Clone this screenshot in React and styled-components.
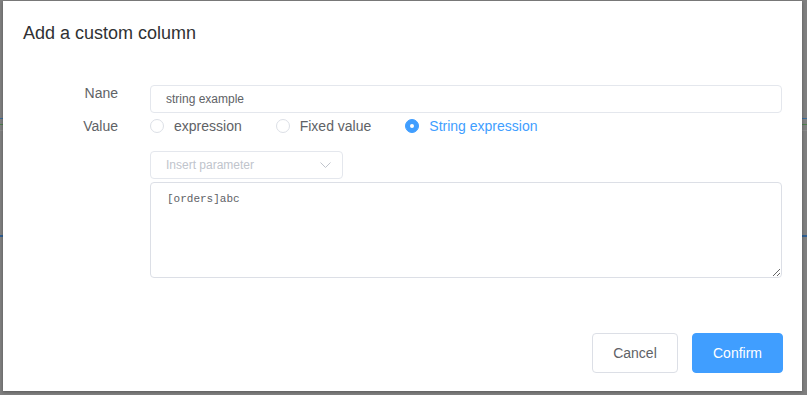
import { useState } from "react";
import styled, { createGlobalStyle } from "styled-components";

const GlobalStyle = createGlobalStyle`
  html, body {
    margin: 0;
    padding: 0;
  }
  body {
    width: 807px;
    height: 395px;
    overflow: hidden;
    background-color: #7f7f7f;
    background-image:
      linear-gradient(to bottom, transparent 235px, #2f5f93 235px, #2f5f93 237px, transparent 237px),
      linear-gradient(to bottom, transparent 118px, #3a6b9a 118px, #3a6b9a 119px, transparent 119px, transparent 124px, #4c7f4c 124px, #4c7f4c 125px, transparent 125px, transparent 130px, #8a8a8a 130px, #8a8a8a 131px, transparent 131px);
    background-size: 100% 100%, 100% 100%;
    font-family: "Liberation Sans", Arial, sans-serif;
  }
`;

const OPTIONS = ["expression", "Fixed value", "String expression"];

const App = () => {
  const [name, setName] = useState("string example");
  const [mode, setMode] = useState("String expression");
  const [expr, setExpr] = useState("[orders]abc");

  return (
    <>
      <GlobalStyle />
      <Dialog>
        <Header>
          <Title>Add a custom column</Title>
        </Header>
        <Body>
          <FormRow>
            <Label>Nane</Label>
            <Input value={name} onChange={(e) => setName(e.target.value)} />
          </FormRow>
          <FormRow>
            <Label $tall>Value</Label>
            <RadioGroup>
              {OPTIONS.map((opt) => (
                <Radio key={opt} $checked={mode === opt} onClick={() => setMode(opt)}>
                  <RadioCircle $checked={mode === opt} />
                  <span>{opt}</span>
                </Radio>
              ))}
            </RadioGroup>
          </FormRow>
          <FormRow $top={12}>
            <Label />
            <Select>
              <span>Insert parameter</span>
              <svg width="11" height="6" viewBox="0 0 11 6" fill="none">
                <path d="M0.5 0.5 L5.5 5.5 L10.5 0.5" stroke="#c0c4cc" strokeWidth="1" />
              </svg>
            </Select>
          </FormRow>
          <FormRow $top={3}>
            <Label />
            <TextArea value={expr} onChange={(e) => setExpr(e.target.value)} spellCheck={false} />
          </FormRow>
        </Body>
        <Footer>
          <Button>Cancel</Button>
          <Button $primary>Confirm</Button>
        </Footer>
      </Dialog>
    </>
  );
};
export default App;

const Dialog = styled.div`
  margin: 1px 5px 0 3px;
  width: 799px;
  height: 390px;
  background: #fff;
  display: flex;
  flex-direction: column;
  box-sizing: border-box;
  box-shadow: 0 1px 3px rgba(0, 0, 0, 0.3);
`;

const Header = styled.div`
  padding: 20px 20px 10px;
`;

const Title = styled.span`
  display: block;
  font-size: 18px;
  line-height: 24px;
  color: #303133;
`;

const Body = styled.div`
  padding: 30px 20px 0;
  display: flex;
  flex-direction: column;
`;

const FormRow = styled.div`
  display: flex;
  align-items: flex-start;
  margin-top: ${(p) => p.$top || 0}px;
`;

const Label = styled.label`
  flex: 0 0 95px;
  padding-right: 32px;
  text-align: right;
  font-size: 14px;
  line-height: ${(p) => (p.$tall ? "26px" : "16px")};
  color: #606266;
`;

const Input = styled.input`
  flex: 1;
  height: 28px;
  box-sizing: border-box;
  border: 1px solid #e4e7ed;
  border-radius: 4px;
  padding: 0 15px;
  font-family: "Liberation Sans", Arial, sans-serif;
  font-size: 12px;
  color: #606266;
  outline: none;
`;

const RadioGroup = styled.div`
  display: flex;
  align-items: center;
  height: 26px;
`;

const Radio = styled.label`
  display: flex;
  align-items: center;
  gap: 10px;
  margin-right: 34px;
  font-size: 14px;
  color: ${(p) => (p.$checked ? "#409eff" : "#606266")};
  cursor: pointer;
`;

const RadioCircle = styled.span`
  width: 14px;
  height: 14px;
  box-sizing: border-box;
  border-radius: 50%;
  border: 1px solid ${(p) => (p.$checked ? "#409eff" : "#dcdfe6")};
  background: ${(p) => (p.$checked ? "#409eff" : "#fff")};
  display: flex;
  align-items: center;
  justify-content: center;
  &::after {
    content: "";
    width: 4px;
    height: 4px;
    border-radius: 50%;
    background: #fff;
    display: ${(p) => (p.$checked ? "block" : "none")};
  }
`;

const Select = styled.div`
  width: 193px;
  height: 28px;
  box-sizing: border-box;
  border: 1px solid #e4e7ed;
  border-radius: 4px;
  padding: 0 11px 0 15px;
  display: flex;
  align-items: center;
  justify-content: space-between;
  font-size: 12px;
  color: #c0c4cc;
`;

const TextArea = styled.textarea`
  flex: 1;
  height: 96px;
  box-sizing: border-box;
  border: 1px solid #dcdfe6;
  border-radius: 4px;
  padding: 8px 16px;
  font-family: "Liberation Mono", "Courier New", monospace;
  font-size: 11px;
  line-height: 16px;
  color: #606266;
  resize: vertical;
  outline: none;
`;

const Footer = styled.div`
  margin-top: auto;
  padding: 0 19px 18px 20px;
  display: flex;
  justify-content: flex-end;
  gap: 14px;
`;

const Button = styled.button`
  height: 40px;
  padding: 0 ${(p) => (p.$primary ? "20px" : "19px")};
  min-width: ${(p) => (p.$primary ? "91px" : "86px")};
  box-sizing: border-box;
  border-radius: 4px;
  border: 1px solid ${(p) => (p.$primary ? "#409eff" : "#dcdfe6")};
  background: ${(p) => (p.$primary ? "#409eff" : "#fff")};
  color: ${(p) => (p.$primary ? "#fff" : "#606266")};
  font-family: "Liberation Sans", Arial, sans-serif;
  font-size: 14px;
  cursor: pointer;
`;
